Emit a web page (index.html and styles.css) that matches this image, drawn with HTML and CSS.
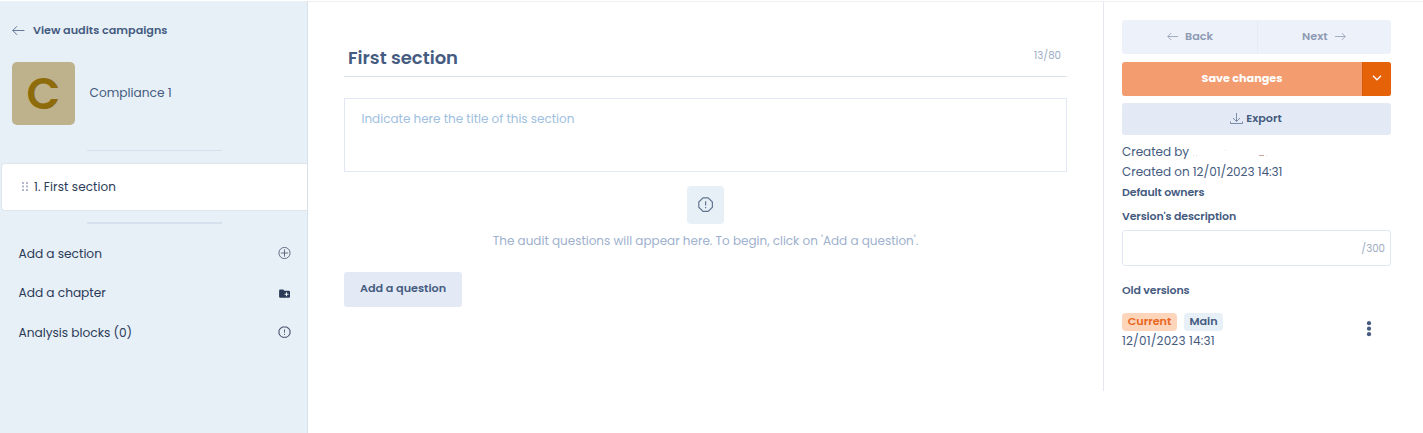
FILE: index.html
```
<!DOCTYPE html>
<html lang="en">
<head>
<meta charset="utf-8">
<title>Compliance 1</title>
<link rel="stylesheet" href="styles.css">
</head>
<body>
<div class="app">
  <aside class="sidebar">
    <a class="back-link">
      <svg width="13" height="10" viewBox="0 0 13 10" class="line-icon"><path d="M12.500 5.500H.8M5 1.200.8 5.500 5 9.800"/></svg>
      <span>View audits campaigns</span>
    </a>
    <div class="campaign">
      <div class="avatar">C</div>
      <span class="campaign-name">Compliance 1</span>
    </div>
    <div class="divider"></div>
    <div class="section-card">
      <svg width="6" height="9" viewBox="0 0 6 9" class="grip"><path d="M0 0h2v2H0zM4 0h2v2H4zM0 3.500h2v2H0zM4 3.500h2v2H4zM0 7h2v2H0zM4 7h2v2H4z"/></svg>
      <span>1. First section</span>
    </div>
    <div class="divider divider-thick"></div>
    <nav class="actions">
      <div class="action"><span>Add a section</span>
        <svg width="13" height="13" viewBox="0 0 13 13" class="line-icon dark"><circle cx="6.500" cy="6" r="5.600"/><path d="M6.500 2.300v7.400M2.800 6h7.400"/></svg></div>
      <div class="action"><span>Add a chapter</span>
        <svg width="13" height="13" viewBox="0 0 13 13"><path fill="#2b3a58" d="M2.200 2.500h3l1.200 1.200h4.500q1.100 0 1.100 1v5q0 1-1.100 1H2.200q-1.100 0-1.100-1v-6q0-1.200 1.100-1.200z"/><path stroke="#e7f0f7" stroke-width="1.100" d="M8.500 5.200v4M6.500 7.200h4"/></svg></div>
      <div class="action"><span>Analysis blocks (0)</span>
        <svg width="13" height="13" viewBox="0 0 13 13" class="line-icon dark bold"><path d="M4.600 1h3.800q2.600 1 3.600 3.400v3.200q-1 2.600-3.600 3.600H4.600Q2 10.200 1 7.600V4.400Q2 2 4.600 1z"/><path d="M6.500 3.500v3.200M6.500 7.900v1" stroke-width=".9"/></svg></div>
    </nav>
  </aside>

  <main class="editor">
    <div class="title-row"><h1>First section</h1><span class="counter">13/80</span></div>
    <div class="description">Indicate here the title of this section</div>
    <div class="empty">
      <div class="empty-icon">
        <svg width="16" height="16" viewBox="0 0 16 16" class="line-icon octagon"><path d="M5 .8h5.200L14.400 5v5.200L10.200 14.400H5L.8 10.200V5z"/><path d="M7.600 4.300v4.300M7.600 9.900v1.300"/></svg>
      </div>
      <p>The audit questions will appear here. To begin, click on 'Add a question'.</p>
    </div>
    <button class="add-question">Add a question</button>
  </main>

  <section class="panel">
    <div class="pager">
      <div class="pager-half prev"><svg width="11" height="8" viewBox="0 0 11 8" class="line-icon"><path d="M11 4.500H.8M4.200 1 .8 4.500l3.400 3.500"/></svg><span>Back</span></div>
      <div class="pager-half next"><span>Next</span><svg width="11" height="8" viewBox="0 0 11 8" class="line-icon"><path d="M0 4.500h10.200M6.800 1l3.400 3.500L6.800 8"/></svg></div>
    </div>
    <div class="save">
      <div class="save-main">Save changes</div>
      <div class="save-more"><svg width="10" height="6" viewBox="0 0 10 6"><path d="M1 .8 5 4.800 9 .8" fill="none" stroke="#fff" stroke-width="1.300"/></svg></div>
    </div>
    <div class="export">
      <svg width="13" height="12" viewBox="0 0 13 12" class="line-icon"><path d="M6.500 0v8.300M3 5l3.500 3.500L10 5M.5 8.500v2h12v-2"/></svg>
      <span>Export</span>
    </div>
    <div class="meta"><span>Created by</span>
      <svg width="76" height="10" viewBox="0 0 76 10"><path fill="#dfe1e7" d="M0 8h1v1H0zM3 8h1v1H3zM32 3h1v1h-1zM73 8h1v1h-1z"/><path fill="#cda59d" d="M66 8h5v1h-5z"/></svg></div>
    <div class="meta">Created on 12/01/2023 14:31</div>
    <div class="label">Default owners</div>
    <div class="label version">Version's description</div>
    <div class="version-input">/300</div>
    <div class="label old">Old versions</div>
    <div class="version-row">
      <div>
        <div class="tags"><span class="tag current">Current</span><span class="tag main">Main</span></div>
        <div class="date">12/01/2023 14:31</div>
      </div>
      <svg width="6" height="16" viewBox="0 0 6 16" class="kebab"><circle cx="3" cy="2.200" r="2.100"/><circle cx="3" cy="7.700" r="2.100"/><circle cx="3" cy="13.200" r="2.100"/></svg>
    </div>
  </section>
</div>
</body>
</html>
```
FILE: styles.css
```
* { box-sizing: border-box; }
body { margin: 0; background: #fff; color: #455b80; font: 12px/20px Poppins, Inter, sans-serif; overflow: hidden; }
.app { display: grid; grid-template-columns: 308px 795px 320px; height: 433px; padding-top: 1px; }
.app > * { border-top: 1px solid #eeeff2; }
svg { display: block; flex: none; }
.line-icon { fill: none; stroke: currentColor; stroke-width: .8; }

.sidebar { background: #e7f0f7; border-right: 1px solid #d5e2ed; }
.app > .sidebar { border-top-color: #e9eff5; }
.back-link { display: flex; align-items: center; gap: 8px; height: 20px; margin: 18px 0 0 12px; font-size: 11.2px; font-weight: 600; letter-spacing: .01px; }
.campaign { display: flex; align-items: center; gap: 14.5px; margin: 22px 0 0 12px; }
.avatar { width: 63px; height: 63px; border-radius: 5px; background: #beb28d; color: #8e6c0c; font-size: 44px; font-weight: 600; line-height: 64px; text-align: center; }
.campaign-name { margin-bottom: 2px; font-size: 12.2px; }
.divider { width: 135px; height: 1px; margin: 25px 0 0 87px; background: #d5e2ed; }
.section-card { display: flex; align-items: center; gap: 6px; height: 48px; margin: 12px 0 0 1px; padding-left: 20px; background: #fff; border: 1px solid #dfe5eb; border-right: 0; border-radius: 4px 0 0 4px; color: #2b3a58; letter-spacing: .1px; }
.grip { margin-bottom: 2px; fill: #b0b8ca; }
.divider-thick { height: 2px; margin-top: 11px; }
.actions { margin-top: 10px; }
.action { display: flex; align-items: center; justify-content: space-between; height: 39.5px; padding: 0 16px 0 18.5px; color: #2b3a58; font-size: 12.2px; letter-spacing: -.03px; }
.dark { stroke: #46506a; }
.bold { stroke-width: 1.1; }

.editor { padding: 36px 36px 0; }
.title-row { display: flex; justify-content: space-between; height: 39px; padding: 0 6px 0 4px; border-bottom: 1px solid #dae2ec; }
h1 { margin: 6px 0 0; font-size: 18px; line-height: 27px; font-weight: 600; }
.counter { margin-top: 8px; color: #9cabc5; font-size: 10.2px; line-height: 20px; }
.description { height: 74px; margin-top: 21px; padding: 10px 16.5px; border: 1px solid #e2e9f4; color: #a0c0de; letter-spacing: -.01px; }
.empty { display: flex; flex-direction: column; align-items: center; margin-top: 14px; }
.empty-icon { display: grid; place-items: center; width: 37px; height: 38px; border-radius: 4px; background: #e7f0f7; }
.octagon { stroke: #647591; stroke-width: 1.2; }
.empty p { margin: 7px 0 0; color: #9eb1cd; letter-spacing: -.01px; }
.add-question { display: block; width: 118px; height: 35px; margin-top: 21px; padding: 0 0 3px; border: 0; border-radius: 3px; background: #e3eaf5; color: #455b80; font: 600 11.2px/20px Poppins, Inter, sans-serif; }

.panel { height: 390px; padding: 18px 32px 0 18px; border-left: 1px solid #e6e8f1; }
.pager { display: flex; height: 34px; border-radius: 3px; background: #edf2fa; color: #8d9ab4; font-size: 11.2px; font-weight: 600; }
.pager-half { display: flex; align-items: center; gap: 7px; padding-bottom: 2px; }
.prev { width: 136px; padding-left: 45px; border-right: 1px solid #e5ecf6; }
.next { padding-left: 44px; }
.save { display: flex; height: 34px; margin-top: 8px; border-radius: 3px; overflow: hidden; background: #f29c70; }
.save-main { width: 240px; color: #fff; font-size: 11.2px; font-weight: 700; line-height: 32px; text-align: center; }
.save-more { display: grid; place-items: center; flex: 1; padding-bottom: 2px; border-left: 1px solid #d65c09; background: #e66208; }
.export { display: flex; align-items: center; justify-content: center; gap: 3px; height: 32px; margin: 7px 0; padding: 0 1px 2px 0; border-radius: 3px; background: #e3eaf5; font-size: 11.2px; font-weight: 600; }
.export svg { margin-top: 2px; stroke: #647399; }
.meta { display: flex; align-items: center; gap: 4px; height: 20px; letter-spacing: -.02px; }
.label { height: 20px; font-size: 11px; font-weight: 600; letter-spacing: -.12px; }
.version { margin-top: 4px; }
.version-input { height: 36px; margin-top: 4px; padding: 8px 5px; border: 1px solid #e1e7f3; border-radius: 3px; color: #9cabc0; font-size: 10.2px; line-height: 20px; text-align: right; }
.old { margin-top: 14px; }
.version-row { display: flex; align-items: center; justify-content: space-between; margin-top: 13px; padding-right: 19px; }
.tags { display: flex; gap: 7px; }
.tag { height: 18px; border-radius: 4px; font-size: 11.2px; font-weight: 600; line-height: 17px; text-align: center; }
.current { width: 55px; background: #fdd5bb; color: #e86620; }
.main { width: 39px; background: #e7f0f7; }
.date { letter-spacing: .17px; }
.kebab { margin-bottom: 6px; fill: #455b80; }
```
